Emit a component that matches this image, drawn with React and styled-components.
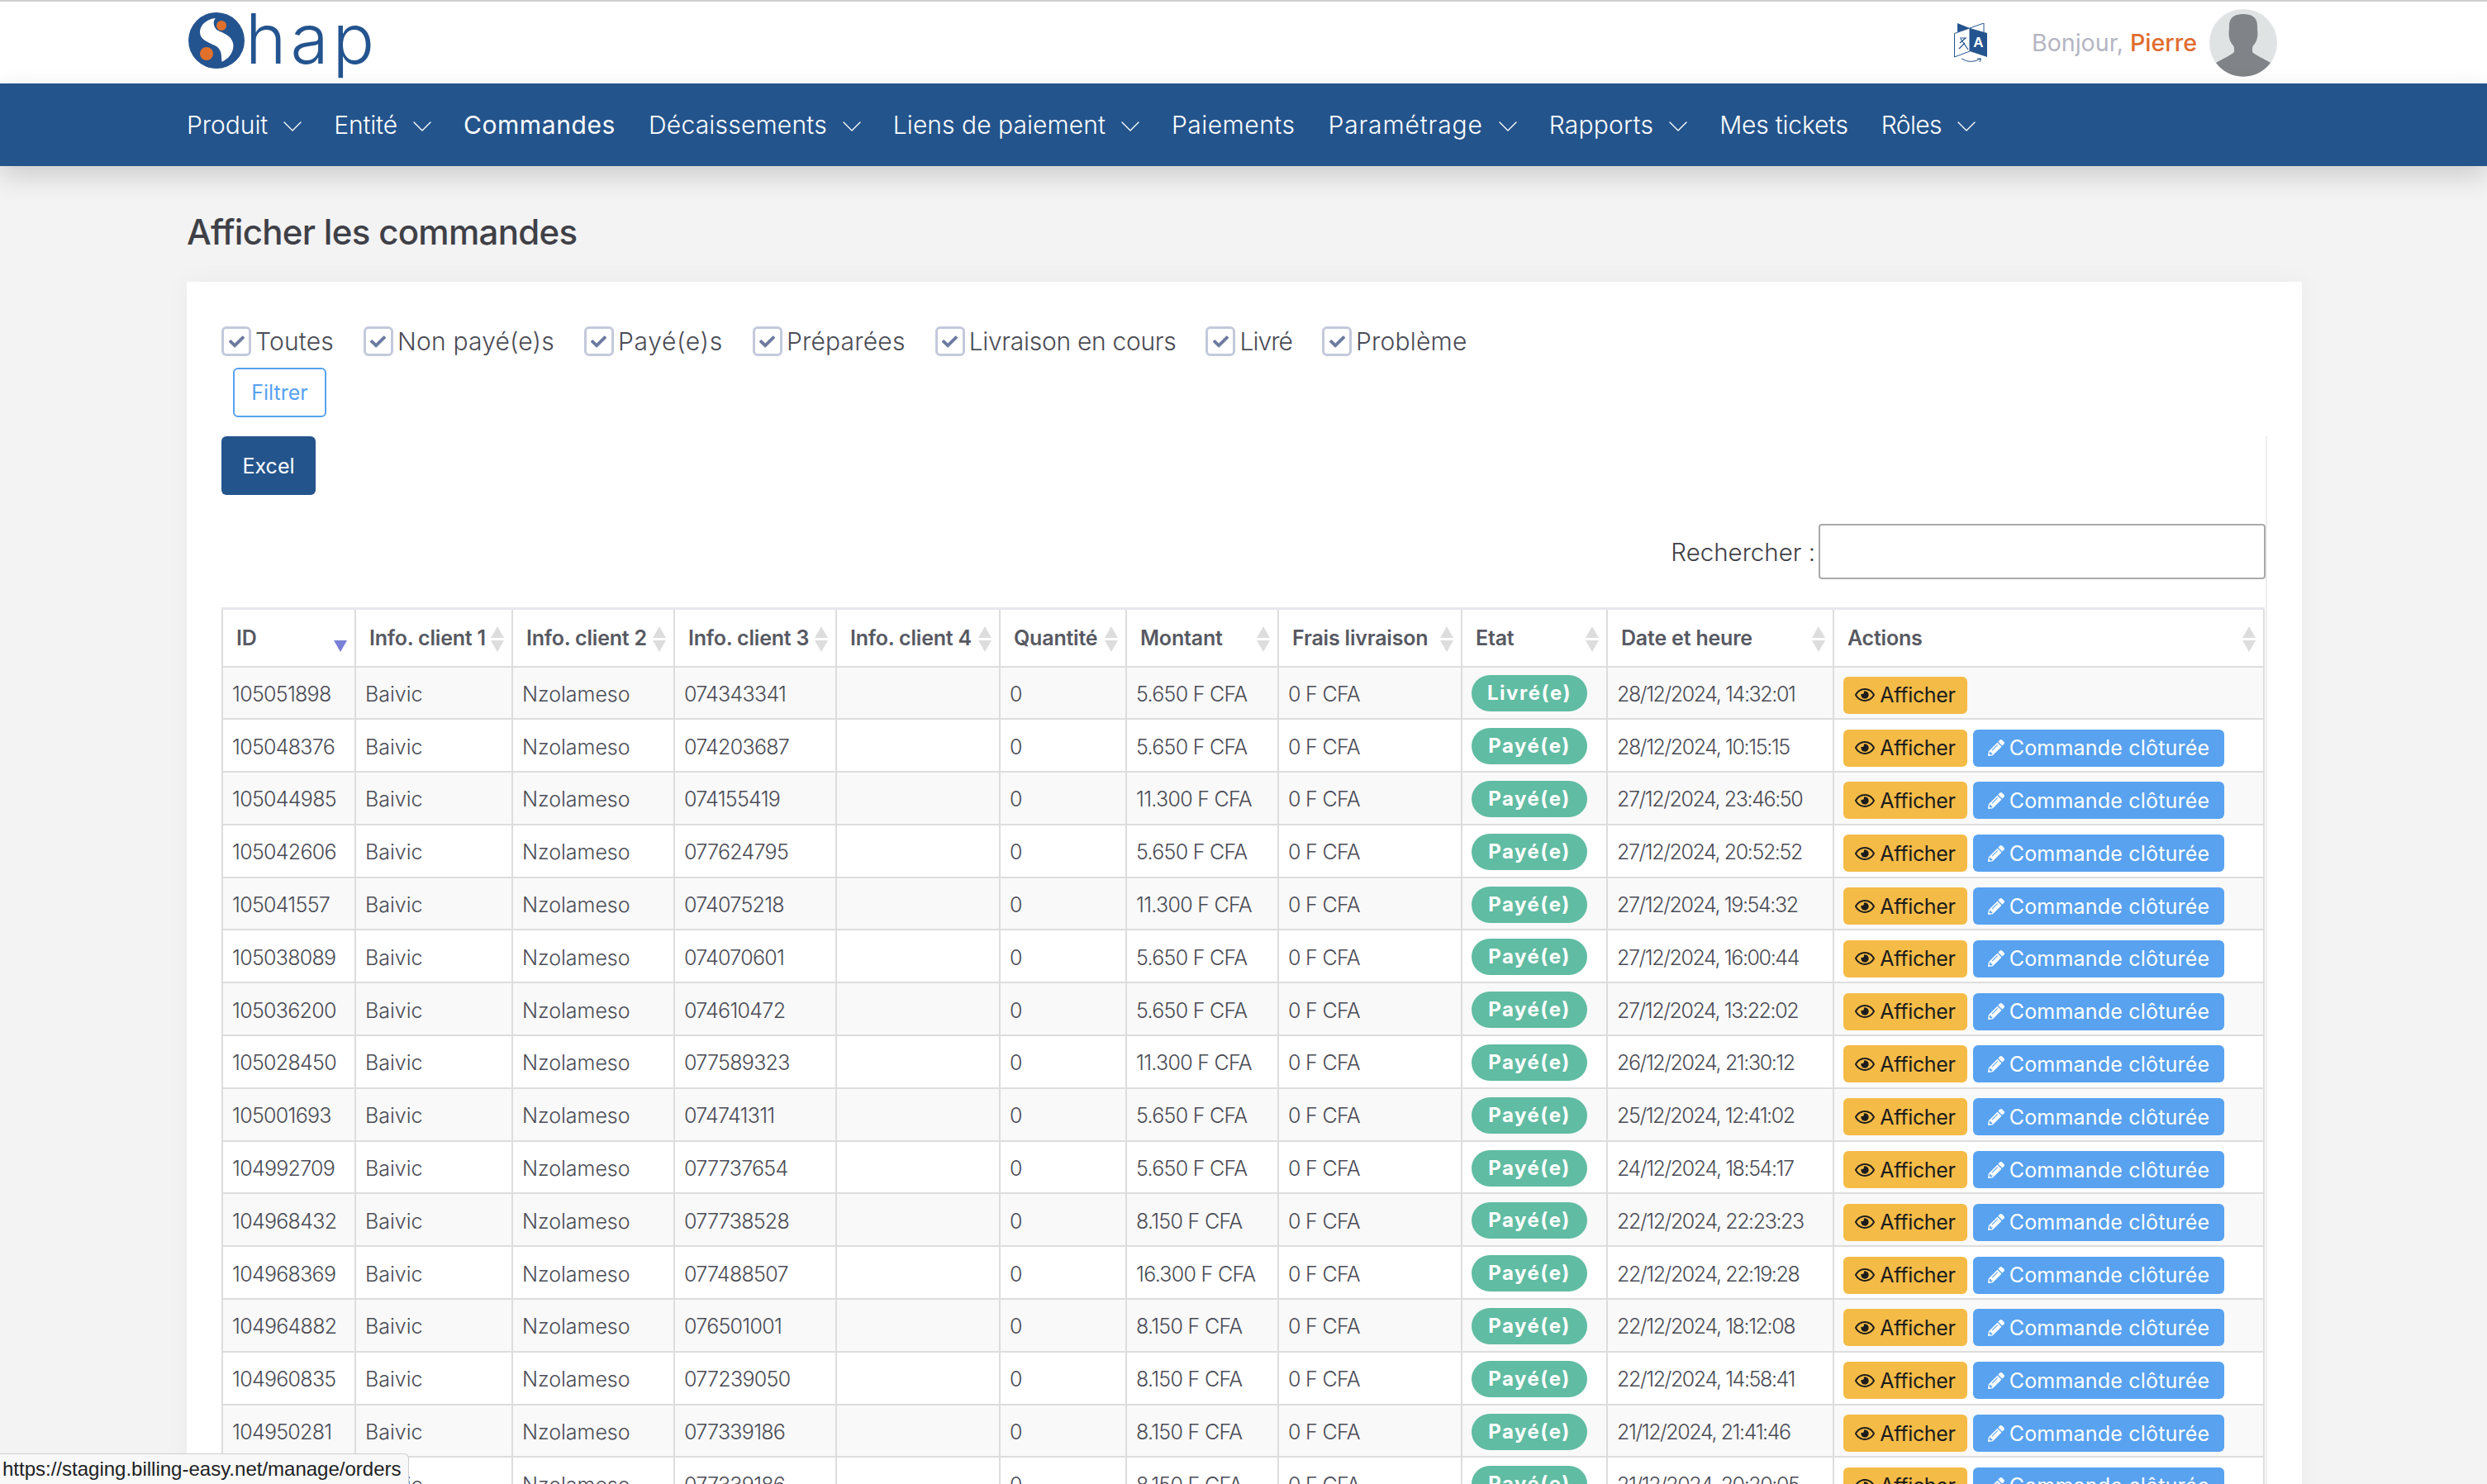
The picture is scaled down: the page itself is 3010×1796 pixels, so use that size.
import styled, { createGlobalStyle } from 'styled-components';
import { ChevronDown } from 'lucide-react';
import { FaCheck, FaRegEye, FaPencilAlt } from 'react-icons/fa';

const NAV_ITEMS = [
  { label: 'Produit', menu: true, spacing: -0.05 },
  { label: 'Entité', menu: true, spacing: -0.15 },
  { label: 'Commandes', active: true, spacing: 0.6 },
  { label: 'Décaissements', menu: true, spacing: 0.2 },
  { label: 'Liens de paiement', menu: true, spacing: 0.05 },
  { label: 'Paiements', spacing: 0.5 },
  { label: 'Paramétrage', menu: true, spacing: 0.85 },
  { label: 'Rapports', menu: true, spacing: 0.25 },
  { label: 'Mes tickets', spacing: -0.2 },
  { label: 'Rôles', menu: true, spacing: -0.65 },
];

const FILTERS = [
  { label: 'Toutes', spacing: 0.2 },
  { label: 'Non payé(e)s', spacing: 0.2 },
  { label: 'Payé(e)s', spacing: 0.7 },
  { label: 'Préparées', spacing: 0.2 },
  { label: 'Livraison en cours', spacing: -0.3 },
  { label: 'Livré', spacing: -0.95 },
  { label: 'Problème', spacing: 0.2 },
];

const COLUMNS = [
  { label: 'ID', width: 161, sorted: true },
  { label: 'Info. client 1', width: 190 },
  { label: 'Info. client 2', width: 196 },
  { label: 'Info. client 3', width: 196 },
  { label: 'Info. client 4', width: 198 },
  { label: 'Quantité', width: 153 },
  { label: 'Montant', width: 184 },
  { label: 'Frais livraison', width: 222 },
  { label: 'Etat', width: 176 },
  { label: 'Date et heure', width: 274 },
  { label: 'Actions', width: 521 },
];

const ORDERS = [
  ['105051898', '074343341', '5.650', '28/12/2024, 14:32:01'],
  ['105048376', '074203687', '5.650', '28/12/2024, 10:15:15'],
  ['105044985', '074155419', '11.300', '27/12/2024, 23:46:50'],
  ['105042606', '077624795', '5.650', '27/12/2024, 20:52:52'],
  ['105041557', '074075218', '11.300', '27/12/2024, 19:54:32'],
  ['105038089', '074070601', '5.650', '27/12/2024, 16:00:44'],
  ['105036200', '074610472', '5.650', '27/12/2024, 13:22:02'],
  ['105028450', '077589323', '11.300', '26/12/2024, 21:30:12'],
  ['105001693', '074741311', '5.650', '25/12/2024, 12:41:02'],
  ['104992709', '077737654', '5.650', '24/12/2024, 18:54:17'],
  ['104968432', '077738528', '8.150', '22/12/2024, 22:23:23'],
  ['104968369', '077488507', '16.300', '22/12/2024, 22:19:28'],
  ['104964882', '076501001', '8.150', '22/12/2024, 18:12:08'],
  ['104960835', '077239050', '8.150', '22/12/2024, 14:58:41'],
  ['104950281', '077339186', '8.150', '21/12/2024, 21:41:46'],
  ['104950280', '077339186', '8.150', '21/12/2024, 20:20:05'],
];

function LogoMark() {
  return (
    <svg width="68" height="68" viewBox="0 0 68 68">
      <circle cx="34" cy="34" r="34" fill="#24548f" />
      <path
        d="M33 7C22 8 14 15 14 24C14 33 24 36 32 40C38 43 40 48 40 54C40 57 41 60 40 60C50 56 56 46 54 37C52 28 42 25 36 22C32 20 28 12 33 7Z"
        fill="#fff"
      />
      <circle cx="40" cy="16" r="6" fill="#e0712c" />
      <circle cx="22" cy="50" r="8" fill="#e0712c" />
    </svg>
  );
}

function TranslateIcon() {
  return (
    <svg width="40" height="48" viewBox="0 0 40 48">
      <path d="M4 0L19 6L4 11Z" fill="#24548f" />
      <path d="M19 6L36 0V11" fill="none" stroke="#24548f" strokeWidth="1" />
      <path d="M.5 12.5L19 6V34L.5 41Z" fill="#fff" stroke="#24548f" strokeWidth="1" />
      <path d="M19 6L40 12V41L19 34Z" fill="#24548f" />
      <path d="M7 18H14L7 24M8 19L17 32M13 24L6 31" fill="none" stroke="#24548f" strokeWidth="1.2" />
      <text x="29.5" y="29" textAnchor="middle" fontFamily="Liberation Sans, sans-serif" fontWeight="700" fontSize="17" fill="#fff">
        A
      </text>
      <path d="M9 43Q20 50 32 43M28 43H32.5L31 47" fill="none" stroke="#24548f" strokeWidth="1" />
    </svg>
  );
}

function AvatarFigure() {
  return (
    <svg width="82" height="82" viewBox="0 0 82 82">
      <circle cx="41" cy="41" r="41" fill="#dfe3e4" />
      <path
        d="M41 6C32 6 24 9 24 20C24 27 23 30 24 34C25 42 30 43 30 48V52C26 56 16 60 8 65A41 41 0 0 0 74 65C66 60 56 56 52 52V48C52 43 57 42 58 34C59 30 58 27 58 20C58 9 50 6 41 6Z"
        fill="#808387"
      />
    </svg>
  );
}

export default function App() {
  return (
    <>
      <GlobalStyle />
      <TopBar>
        <Logo>
          <LogoMark />
          <LogoText>hap</LogoText>
        </Logo>
        <UserArea>
          <TranslateIcon />
          <Greeting>
            Bonjour, <UserName>Pierre</UserName>
          </Greeting>
          <AvatarFigure />
        </UserArea>
      </TopBar>

      <NavBar>
        {NAV_ITEMS.map((item) => (
          <NavItem key={item.label} $active={item.active} $spacing={item.spacing}>
            {item.label}
            {item.menu && <ChevronDown size={40} strokeWidth={0.8} />}
          </NavItem>
        ))}
      </NavBar>

      <Main>
        <PageTitle>Afficher les commandes</PageTitle>
        <Card>
          <FilterRow>
            {FILTERS.map((filter) => (
              <CheckLabel key={filter.label} $spacing={filter.spacing}>
                <CheckBox>
                  <FaCheck size={19} />
                </CheckBox>
                {filter.label}
              </CheckLabel>
            ))}
          </FilterRow>
          <FilterButton>Filtrer</FilterButton>

          <TableWrapper>
            <ExcelButton>Excel</ExcelButton>
            <SearchRow>
              <label>Rechercher :</label>
              <SearchInput type="text" />
            </SearchRow>
            <OrdersTable>
              <colgroup>
                {COLUMNS.map((col) => (
                  <Col key={col.label} $width={col.width} />
                ))}
              </colgroup>
              <thead>
                <tr>
                  {COLUMNS.map((col) => (
                    <HeadCell key={col.label}>
                      {col.label}
                      <SortIcon $sorted={col.sorted} />
                    </HeadCell>
                  ))}
                </tr>
              </thead>
              <tbody>
                {ORDERS.map(([id, phone, amount, date], i) => (
                  <Row key={id}>
                    <Cell $spacing={-0.7}>{id}</Cell>
                    <Cell>Baivic</Cell>
                    <Cell>Nzolameso</Cell>
                    <Cell $spacing={-0.7}>{phone}</Cell>
                    <Cell />
                    <Cell>0</Cell>
                    <Cell $spacing={-0.7}>{amount} F CFA</Cell>
                    <Cell $spacing={-0.7}>0 F CFA</Cell>
                    <Cell>
                      <StatusPill>{i === 0 ? 'Livré(e)' : 'Payé(e)'}</StatusPill>
                    </Cell>
                    <Cell $spacing={-1.4}>{date}</Cell>
                    <Cell>
                      <Actions>
                        <ViewButton>
                          <FaRegEye size={24} />
                          Afficher
                        </ViewButton>
                        {i > 0 && (
                          <CloseButton>
                            <FaPencilAlt size={20} />
                            Commande clôturée
                          </CloseButton>
                        )}
                      </Actions>
                    </Cell>
                  </Row>
                ))}
              </tbody>
            </OrdersTable>
          </TableWrapper>
        </Card>
      </Main>

      <StatusBubble>https://staging.billing-easy.net/manage/orders</StatusBubble>
    </>
  );
}

const GlobalStyle = createGlobalStyle`
  html, body {
    margin: 0;
    height: 1796px;
    overflow: hidden;
    background: #f3f3f3;
    font-family: Inter, "Liberation Sans", sans-serif;
    color: #3f4047;
  }
  * {
    box-sizing: border-box;
  }
`;

const TopBar = styled.header`
  height: 101px;
  padding: 0 254px 0 228px;
  background: #fff;
  border-top: 2px solid #cfcfcf;
  display: flex;
  align-items: center;
  justify-content: space-between;
`;

const Logo = styled.div`
  display: flex;
  align-items: center;
  margin-top: -6px;
`;

const LogoText = styled.span`
  margin: -3px 0 0 1px;
  font-size: 84px;
  line-height: 1;
  font-weight: 300;
  letter-spacing: 5px;
  color: #24548f;
`;

const UserArea = styled.div`
  display: flex;
  align-items: center;
`;

const Greeting = styled.span`
  margin: 0 15px 0 54px;
  font-size: 28.6px;
  color: #b5b5c3;
`;

const UserName = styled.span`
  color: #e06c2e;
  font-weight: 500;
`;

const NavBar = styled.nav`
  position: relative;
  height: 100px;
  padding: 0 226px;
  background: #24548c;
  box-shadow: 0 12px 30px rgba(0, 0, 0, 0.16);
  display: flex;
  align-items: center;
  gap: 40px;
`;

const NavItem = styled.a`
  display: flex;
  align-items: center;
  gap: 10px;
  font-size: 30px;
  font-weight: ${(p) => (p.$active ? 400 : 300)};
  letter-spacing: ${(p) => p.$spacing}px;
  color: #fff;

  svg {
    margin: 3px -10px 0 0;
  }
`;

const Main = styled.main`
  padding: 0 224px 0 226px;
`;

const PageTitle = styled.h1`
  margin: 0;
  padding-top: 50px;
  height: 140px;
  font-size: 42px;
  line-height: 60px;
  font-weight: 500;
  letter-spacing: -0.7px;
  color: #3f4047;
`;

const Card = styled.section`
  padding: 54px 42px 0;
  background: #fff;
  box-shadow: 0 0 30px rgba(0, 0, 0, 0.04);
`;

const FilterRow = styled.div`
  display: flex;
  gap: 36px;
`;

const CheckLabel = styled.label`
  display: flex;
  align-items: center;
  gap: 5px;
  height: 36px;
  font-size: 30px;
  font-weight: 300;
  letter-spacing: ${(p) => p.$spacing}px;
  color: #4a4b55;
`;

const CheckBox = styled.span`
  width: 36px;
  height: 36px;
  border: 3px solid #c4c9dc;
  border-radius: 6px;
  color: #6c7aa0;
  display: flex;
  align-items: center;
  justify-content: center;
`;

const FilterButton = styled.button`
  display: block;
  width: 113px;
  height: 60px;
  margin: 14px 0 0 14px;
  background: #fff;
  border: 2px solid #58a2f0;
  border-radius: 6px;
  font: 400 25px Inter, sans-serif;
  color: #58a2f0;
`;

const TableWrapper = styled.div`
  margin-top: 23px;
  border-right: 2px solid #eeeeee;
`;

const ExcelButton = styled.button`
  display: block;
  width: 114px;
  height: 71px;
  background: #24548c;
  border: 0;
  border-radius: 6px;
  font: 400 25px Inter, sans-serif;
  color: #fff;
`;

const SearchRow = styled.div`
  margin-top: 35px;
  display: flex;
  align-items: center;
  justify-content: flex-end;
  gap: 4px;
  font-size: 29.5px;
  font-weight: 300;
  color: #3f4047;
`;

const SearchInput = styled.input`
  width: 541px;
  height: 67px;
  background: #fff;
  border: 2px solid #aaaaaa;
  border-radius: 4px;
`;

const OrdersTable = styled.table`
  width: 2471px;
  margin: 34px 0 0;
  table-layout: fixed;
  border-collapse: collapse;
  border-top: 3px solid #e6e8ec;
`;

const Col = styled.col`
  width: ${(p) => p.$width}px;
`;

const HeadCell = styled.th`
  position: relative;
  height: 70px;
  padding: 0 0 0 16px;
  border: 2px solid #dddddd;
  border-top: 0;
  text-align: left;
  font-size: 25px;
  font-weight: 600;
  letter-spacing: -0.2px;
  white-space: nowrap;
  color: #575962;
`;

const SortIcon = styled.span`
  position: absolute;
  right: 9px;
  top: 20px;
  width: 16px;
  height: 31px;

  &::before,
  &::after {
    content: '';
    position: absolute;
    left: 0;
    border-left: 8px solid transparent;
    border-right: 8px solid transparent;
  }
  &::before {
    top: 0;
    display: ${(p) => (p.$sorted ? 'none' : 'block')};
    border-bottom: 14px solid #dddddd;
  }
  &::after {
    bottom: 0;
    border-top: 14px solid ${(p) => (p.$sorted ? '#7a7fd6' : '#dddddd')};
  }
`;

const Row = styled.tr`
  height: 63.8px;

  &:nth-child(odd) {
    background: #f9f9f9;
  }
`;

const Cell = styled.td`
  padding: 3px 11px 0;
  border: 2px solid #dddddd;
  font-size: 25px;
  font-weight: 300;
  letter-spacing: ${(p) => p.$spacing || 0}px;
  white-space: nowrap;
  color: #4a4b55;
`;

const StatusPill = styled.span`
  display: block;
  width: 140px;
  height: 44px;
  margin-top: -1px;
  border-radius: 22px;
  background: #60bca2;
  font-size: 24px;
  font-weight: 700;
  line-height: 44px;
  letter-spacing: 1.5px;
  text-align: center;
  color: #fff;
`;

const Actions = styled.div`
  display: flex;
  gap: 7px;
  margin-top: 3px;
`;

const ActionButton = styled.button`
  height: 45px;
  border: 0;
  border-radius: 6px;
  display: flex;
  align-items: center;
  justify-content: center;
  gap: 6px;
  font: 400 25px Inter, sans-serif;
  white-space: nowrap;
`;

const ViewButton = styled(ActionButton)`
  width: 150px;
  background: #f5bb47;
  letter-spacing: -0.3px;
  color: #1c1c1c;
`;

const CloseButton = styled(ActionButton)`
  width: 304px;
  background: #58a2f0;
  letter-spacing: 0.2px;
  color: #fff;
`;

const StatusBubble = styled.div`
  position: fixed;
  left: 0;
  bottom: 0;
  width: 495px;
  height: 37px;
  padding-left: 3px;
  background: #f8f8f8;
  border: 1px solid #cfcfcf;
  border-left: 0;
  border-bottom: 0;
  border-top-right-radius: 6px;
  font: 24px/36px "Liberation Sans", sans-serif;
  white-space: nowrap;
  color: #202124;
`;
